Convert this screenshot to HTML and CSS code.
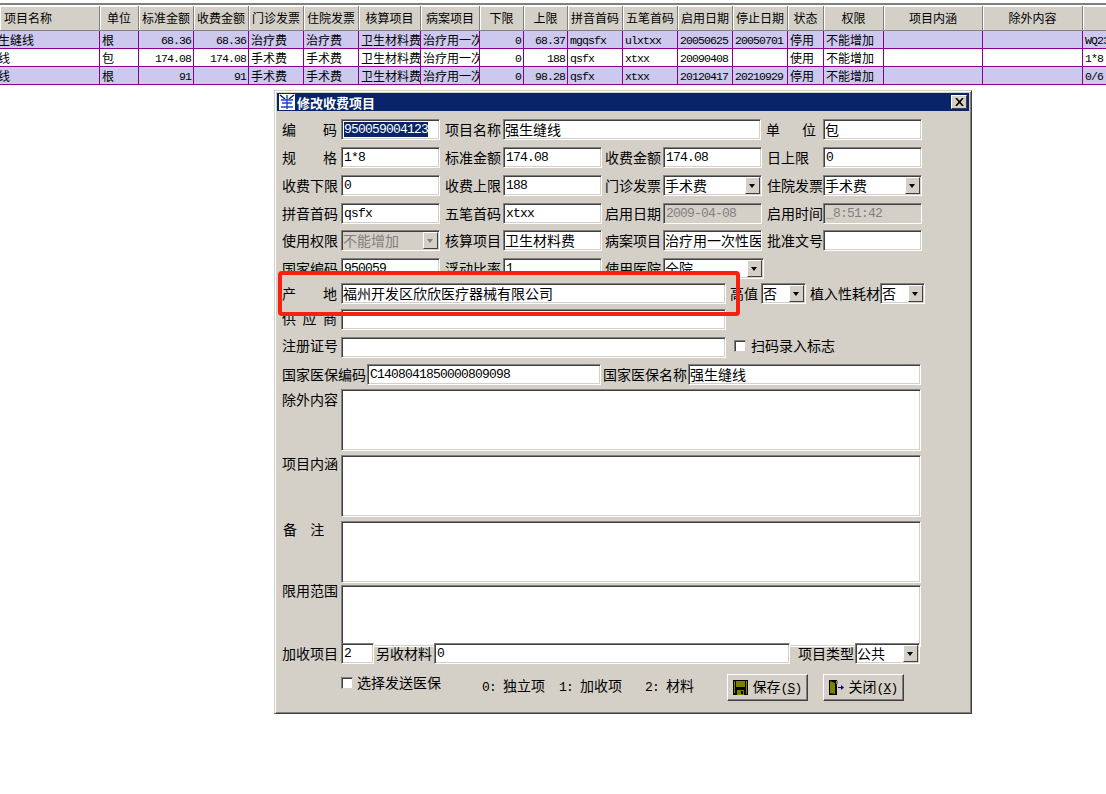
FILE: index.html
```html
<!DOCTYPE html>
<html lang="zh-CN">
<head>
    <meta charset="UTF-8">
    <title>修改收费项目</title>
    <link rel="stylesheet" href="styles.css">
</head>
<body>
    <div class="grid-top"></div>
    <div class="grid-wrap">
        <div class="grid-row grid-head">
            <div class="c c1">项目名称</div><div class="c c2">单位</div><div class="c c3">标准金额</div><div class="c c4">收费金额</div><div class="c c5">门诊发票</div><div class="c c6">住院发票</div><div class="c c7">核算项目</div><div class="c c8">病案项目</div><div class="c c9">下限</div><div class="c c10">上限</div><div class="c c11">拼音首码</div><div class="c c12">五笔首码</div><div class="c c13">启用日期</div><div class="c c14">停止日期</div><div class="c c15">状态</div><div class="c c16">权限</div><div class="c c17">项目内涵</div><div class="c c18">除外内容</div><div class="c c19"></div>
        </div>
        <div class="grid-row row-odd">
            <div class="c c1 clip-left">美国强生缝线</div><div class="c c2">根</div><div class="c c3 num r">68.36</div><div class="c c4 num r">68.36</div><div class="c c5">治疗费</div><div class="c c6">治疗费</div><div class="c c7">卫生材料费</div><div class="c c8">治疗用一次性</div><div class="c c9 num r">0</div><div class="c c10 num r">68.37</div><div class="c c11 num">mgqsfx</div><div class="c c12 num">ulxtxx</div><div class="c c13 num">20050625</div><div class="c c14 num">20050701</div><div class="c c15">停用</div><div class="c c16">不能增加</div><div class="c c17"></div><div class="c c18"></div><div class="c c19 num">WQ23</div>
        </div>
        <div class="grid-row">
            <div class="c c1 clip-left">强生缝线</div><div class="c c2">包</div><div class="c c3 num r">174.08</div><div class="c c4 num r">174.08</div><div class="c c5">手术费</div><div class="c c6">手术费</div><div class="c c7">卫生材料费</div><div class="c c8">治疗用一次性</div><div class="c c9 num r">0</div><div class="c c10 num r">188</div><div class="c c11 num">qsfx</div><div class="c c12 num">xtxx</div><div class="c c13 num">20090408</div><div class="c c14 num"></div><div class="c c15">使用</div><div class="c c16">不能增加</div><div class="c c17"></div><div class="c c18"></div><div class="c c19 num">1*8</div>
        </div>
        <div class="grid-row row-odd">
            <div class="c c1 clip-left">强生缝线</div><div class="c c2">根</div><div class="c c3 num r">91</div><div class="c c4 num r">91</div><div class="c c5">手术费</div><div class="c c6">手术费</div><div class="c c7">卫生材料费</div><div class="c c8">治疗用一次性</div><div class="c c9 num r">0</div><div class="c c10 num r">98.28</div><div class="c c11 num">qsfx</div><div class="c c12 num">xtxx</div><div class="c c13 num">20120417</div><div class="c c14 num">20210929</div><div class="c c15">停用</div><div class="c c16">不能增加</div><div class="c c17"></div><div class="c c18"></div><div class="c c19 num">0/6</div>
        </div>
    </div>

    <div class="dialog">
        <div class="titlebar">
            <svg class="title-icon" width="16" height="16" viewBox="0 0 16 16">
                <rect width="16" height="16" fill="#fff"/>
                <path d="M1 1l5 4M15 1l-5 4" stroke="#0a246a" stroke-width="1.6" fill="none"/>
                <path d="M8 1v14M2 6h12M3 9h10M2 13h12" stroke="#1c3fd0" stroke-width="1.4" fill="none"/>
            </svg>
            <span class="title-text">修改收费项目</span>
            <div class="close-btn">
                <svg width="9" height="8" viewBox="0 0 9 8"><path d="M1 0l7 8M8 0l-7 8" stroke="#000" stroke-width="1.6"/></svg>
            </div>
        </div>

        <div class="form">
            <div class="row">
                <label class="lbl just">编码</label>
                <div class="field w99 selected num"><span class="sel">950059004123</span></div>
                <label class="lbl-b">项目名称</label>
                <div class="field w258">强生缝线</div>
                <label class="lbl-d just">单位</label>
                <div class="field w99">包</div>
            </div>
            <div class="row">
                <label class="lbl just">规格</label>
                <div class="field w99 num">1*8</div>
                <label class="lbl-b">标准金额</label>
                <div class="field w99 num">174.08</div>
                <label class="lbl-c">收费金额</label>
                <div class="field w99 num">174.08</div>
                <label class="lbl-d">日上限</label>
                <div class="field w99 num">0</div>
            </div>
            <div class="row">
                <label class="lbl">收费下限</label>
                <div class="field w99 num">0</div>
                <label class="lbl-b">收费上限</label>
                <div class="field w99 num">188</div>
                <label class="lbl-c">门诊发票</label>
                <div class="field w99 combo">手术费<span class="arrow"></span></div>
                <label class="lbl-d">住院发票</label>
                <div class="field w99 combo">手术费<span class="arrow"></span></div>
            </div>
            <div class="row">
                <label class="lbl">拼音首码</label>
                <div class="field w99 num">qsfx</div>
                <label class="lbl-b">五笔首码</label>
                <div class="field w99 num">xtxx</div>
                <label class="lbl-c">启用日期</label>
                <div class="field w99 num disabled">2009-04-08</div>
                <label class="lbl-d">启用时间</label>
                <div class="field w99 num disabled">_8:51:42</div>
            </div>
            <div class="row">
                <label class="lbl">使用权限</label>
                <div class="field w99 combo disabled">不能增加<span class="arrow"></span></div>
                <label class="lbl-b">核算项目</label>
                <div class="field w99">卫生材料费</div>
                <label class="lbl-c">病案项目</label>
                <div class="field w99 clipped">治疗用一次性医</div>
                <label class="lbl-d">批准文号</label>
                <div class="field w99"></div>
            </div>
            <div class="row">
                <label class="lbl">国家编码</label>
                <div class="field w99 num">950059</div>
                <label class="lbl-b">浮动比率</label>
                <div class="field w99 num">1</div>
                <label class="lbl-c">使用医院</label>
                <div class="field w101 combo">全院<span class="arrow"></span></div>
            </div>
            <div class="row row-front">
                <label class="lbl just">产地</label>
                <div class="field w385">福州开发区欣欣医疗器械有限公司</div>
                <label class="lbl-e">高值</label>
                <div class="field w45 combo">否<span class="arrow"></span></div>
                <label class="lbl-f">植入性耗材</label>
                <div class="field w45 combo">否<span class="arrow"></span></div>
            </div>
            <div class="row">
                <label class="lbl just lbl-up1">供应商</label>
                <div class="field w385"></div>
            </div>
            <div class="row">
                <label class="lbl lbl-up2">注册证号</label>
                <div class="field w385"></div>
                <span class="check check-scan"></span>
                <span class="check-text lbl-up2">扫码录入标志</span>
            </div>
            <div class="row">
                <label class="lbl lbl-wide">国家医保编码</label>
                <div class="field w234 num">C1408041850000809098</div>
                <label class="lbl-g">国家医保名称</label>
                <div class="field w233">强生缝线</div>
            </div>
            <div class="row">
                <label class="lbl">除外内容</label>
                <div class="field memo"></div>
            </div>
            <div class="row">
                <label class="lbl lbl-up2">项目内涵</label>
                <div class="field memo"></div>
            </div>
            <div class="row">
                <label class="lbl lbl-note lbl-up2">备 注</label>
                <div class="field memo"></div>
            </div>
            <div class="row">
                <label class="lbl lbl-up5">限用范围</label>
                <div class="field memo"></div>
            </div>
            <div class="row">
                <label class="lbl">加收项目</label>
                <div class="field w33 num">2</div>
                <label class="lbl-h">另收材料</label>
                <div class="field w356 num">0</div>
                <label class="lbl-i">项目类型</label>
                <div class="field w65 combo">公共<span class="arrow"></span></div>
            </div>
            <div class="row row-actions">
                <span class="check check-send"></span>
                <span class="check-text send-text">选择发送医保</span>
                <span class="hint"><span class="num">0:</span>独立项</span>
                <span class="hint hint-2"><span class="num">1:</span>加收项</span>
                <span class="hint hint-3"><span class="num">2:</span>材料</span>
                <div class="btn btn-save">
                    <svg width="15" height="15" viewBox="0 0 15 15">
                        <path d="M0 0h15v15H0z" fill="#000"/>
                        <path d="M3 1h9v6H3z" fill="#808000"/>
                        <path d="M1 1h1v12H1zM13 1h1v13h-1z" fill="#808000"/>
                        <path d="M4 10h7v5H4z" fill="#808000"/>
                        <path d="M8 11h2v3H8z" fill="#000"/>
                    </svg>
                    <span>保存<span class="num">(<u>S</u>)</span></span>
                </div>
                <div class="btn btn-close">
                    <svg width="15" height="15" viewBox="0 0 15 15">
                        <path d="M0 0h8v15H0z" fill="#000"/>
                        <path d="M1 1l5 2v11l-5-1z" fill="#808000"/>
                        <path d="M7 1h2v3H7z" fill="#808080"/>
                        <path d="M9 7h3V5l3 2.5-3 2.5V8H9z" fill="#000080"/>
                    </svg>
                    <span>关闭<span class="num">(<u>X</u>)</span></span>
                </div>
            </div>
        </div>

        <!-- covers the row underneath, as in the marked-up screenshot -->
        <div class="mark-patch"></div>
        <div class="mark"></div>
    </div>
</body>
</html>
```

FILE: styles.css
```css
body {
    margin: 0;
    background: #fff;
    font-family: "Noto Sans CJK SC", "Liberation Sans", sans-serif;
    font-size: 14px;
    color: #000;
    overflow: hidden;
}

.num {
    font-family: "Liberation Mono", monospace;
}

/* background grid */
.grid-top {
    height: 5px;
    border-top: 3px solid #fff;
    border-bottom: 2px solid #808080;
    box-sizing: border-box;
}

.grid-wrap {
    width: 1106px;
    overflow: hidden;
    margin-top: 1px;
}

.grid-row {
    display: flex;
    height: 18px;
    border-bottom: 1px solid #8b008b;
    box-sizing: border-box;
    font-size: 12px;
    line-height: 17px;
    background: #fff;
}

.row-odd {
    background: #ccc8ee;
}

.grid-head {
    height: 25px;
    background: #d4d0c8;
    line-height: 23px;
    border-bottom: 1px solid #808080;
    text-align: center;
}

.c {
    box-sizing: border-box;
    flex: none;
    padding: 0 1px 0 2px;
    border-right: 1px solid #8b008b;
    overflow: hidden;
    white-space: nowrap;
}

.c.num {
    font-size: 11.5px;
    letter-spacing: -0.9px;
    padding-top: 1px;
}

.c.r {
    text-align: right;
    padding-right: 2px;
}

.grid-head .c {
    border-right: 1px solid #808080;
    box-shadow: inset 1px 1px #fff;
    padding: 0;
}

.grid-head .c1 {
    text-align: left;
    padding-left: 4px;
}

.c1 { width: 100px; }
.c2 { width: 39px; }
.c3, .c4, .c5, .c6 { width: 55px; }
.c7 { width: 62px; }
.c8 { width: 59px; }
.c9, .c10 { width: 44px; }
.c11, .c12, .c13, .c14 { width: 55px; }
.c15 { width: 36px; }
.c16 { width: 60px; }
.c17 { width: 99px; }
.c18 { width: 100px; }
.c19 { width: 30px; border-right: none; }

.clip-left {
    text-indent: -40px;
}

/* dialog window */
.dialog {
    position: absolute;
    left: 274px;
    top: 90px;
    width: 698px;
    height: 624px;
    box-sizing: border-box;
    background: #d4d0c8;
    border: 1px solid;
    border-color: #d4d0c8 #404040 #404040 #d4d0c8;
    box-shadow: inset 1px 1px #fff, inset -1px -1px #808080;
    padding: 2px;
}

.titlebar {
    display: flex;
    align-items: center;
    height: 18px;
    background: #0a246a;
    color: #fff;
    font-weight: 700;
    font-size: 13px;
    padding-left: 2px;
}

.title-icon {
    flex: none;
    margin-right: 2px;
}

.close-btn {
    margin-left: auto;
    margin-right: 2px;
    width: 16px;
    height: 14px;
    box-sizing: border-box;
    background: #d4d0c8;
    border: 1px solid;
    border-color: #fff #404040 #404040 #fff;
    display: flex;
    align-items: center;
    justify-content: center;
}

.form {
    display: grid;
    grid-template-rows: 28px 28px 28px 27px 28px 25px 26px 28px 27px 25px 66px 66px 64px 58px 31px 40px;
    padding: 8px 0 0 5px;
}

.row {
    display: flex;
    align-items: flex-start;
    line-height: 21px;
    white-space: nowrap;
}

.row-front {
    position: relative;
    z-index: 2;
}

.lbl, .lbl-b, .lbl-c, .lbl-d, .lbl-e, .lbl-f, .lbl-g, .lbl-h, .lbl-i {
    flex: none;
    box-sizing: border-box;
    display: block;
}

.lbl { width: 59px; padding-right: 2px; }
.lbl.just { padding-right: 4px; }
.lbl-b { width: 63px; padding-left: 5px; }
.lbl-c { width: 61px; padding-left: 3px; }
.lbl-d { width: 61px; padding-left: 5px; }
.lbl-d.just { width: 62px; padding-right: 7px; }
.lbl-e { width: 35px; padding-left: 4px; }
.lbl-f { width: 74px; padding-left: 4px; }
.lbl-g { width: 87px; padding-left: 2px; }
.lbl-h { width: 60px; padding-left: 2px; }
.lbl-i { width: 65px; padding-left: 8px; }

.lbl-wide { width: 85px; }
.lbl-note { padding-left: 1px; word-spacing: 10px; }

.lbl-up1 { margin-top: -1px; }
.lbl-up2 { margin-top: -2px; }
.lbl-up5 { margin-top: -5px; }

.just {
    text-align: justify;
    text-align-last: justify;
}

.field {
    position: relative;
    flex: none;
    box-sizing: border-box;
    height: 21px;
    padding: 0 0 0 1px;
    background: #fff;
    border: 1px solid;
    border-color: #808080 #fff #fff #808080;
    box-shadow: inset 1px 1px #404040, inset -1px -1px #d4d0c8;
    line-height: 18px;
    overflow: hidden;
}

.field.num {
    font-size: 13px;
    letter-spacing: -0.8px;
    line-height: 20px;
    padding-left: 2px;
}

.w33 { width: 33px; }
.w45 { width: 45px; }
.w65 { width: 65px; }
.w99 { width: 99px; }
.w101 { width: 101px; }
.w233 { width: 233px; }
.w234 { width: 234px; }
.w258 { width: 258px; }
.w356 { width: 356px; }
.w385 { width: 385px; }

.memo {
    width: 580px;
    height: 62px;
}

.disabled {
    background: #d4d0c8;
    color: #808080;
}

.sel {
    background: #0a246a;
    color: #fff;
}

.arrow {
    position: absolute;
    right: 1px;
    top: 1px;
    bottom: 1px;
    width: 15px;
    background: #d4d0c8;
    border: 1px solid;
    border-color: #fff #404040 #404040 #fff;
    box-sizing: border-box;
}

.arrow::after {
    content: "";
    position: absolute;
    left: 3px;
    top: 6px;
    border: 3.5px solid transparent;
    border-top: 4px solid #000;
    border-bottom: none;
}

.disabled .arrow::after {
    border-top-color: #808080;
}

.check {
    flex: none;
    width: 12px;
    height: 12px;
    box-sizing: border-box;
    background: #fff;
    border: 1px solid;
    border-color: #808080 #d4d0c8 #d4d0c8 #808080;
    box-shadow: inset 1px 1px #404040;
}

.check-scan {
    margin: 3px 0 0 8px;
}

.check-text {
    margin-left: 5px;
}

.row-actions {
    position: relative;
}

.check-send {
    position: absolute;
    left: 59px;
    top: 3px;
}

.send-text {
    position: absolute;
    left: 70px;
    top: -2px;
}

.hint {
    position: absolute;
    left: 200px;
    top: 1px;
}

.hint .num {
    font-size: 13px;
    letter-spacing: -0.8px;
    margin-right: 7px;
}

.hint-2 { left: 277px; }
.hint-3 { left: 363px; }

.btn {
    position: absolute;
    top: 0;
    display: flex;
    align-items: center;
    justify-content: center;
    gap: 4px;
    width: 81px;
    height: 27px;
    box-sizing: border-box;
    background: #d4d0c8;
    border: 1px solid;
    border-color: #fff #404040 #404040 #fff;
    box-shadow: inset -1px -1px #808080;
}

.btn .num {
    font-size: 13px;
    letter-spacing: -0.8px;
}

.btn-save { left: 445px; }
.btn-close { left: 541px; }

/* red marker from the screenshot */
.mark {
    position: absolute;
    left: 3px;
    top: 180px;
    width: 462px;
    height: 45px;
    box-sizing: border-box;
    border: 4px solid #f8200e;
    border-radius: 4px;
    z-index: 3;
}

.mark-patch {
    position: absolute;
    left: 6px;
    top: 183px;
    width: 456px;
    height: 10px;
    background: #d4d0c8;
    z-index: 1;
}
```
